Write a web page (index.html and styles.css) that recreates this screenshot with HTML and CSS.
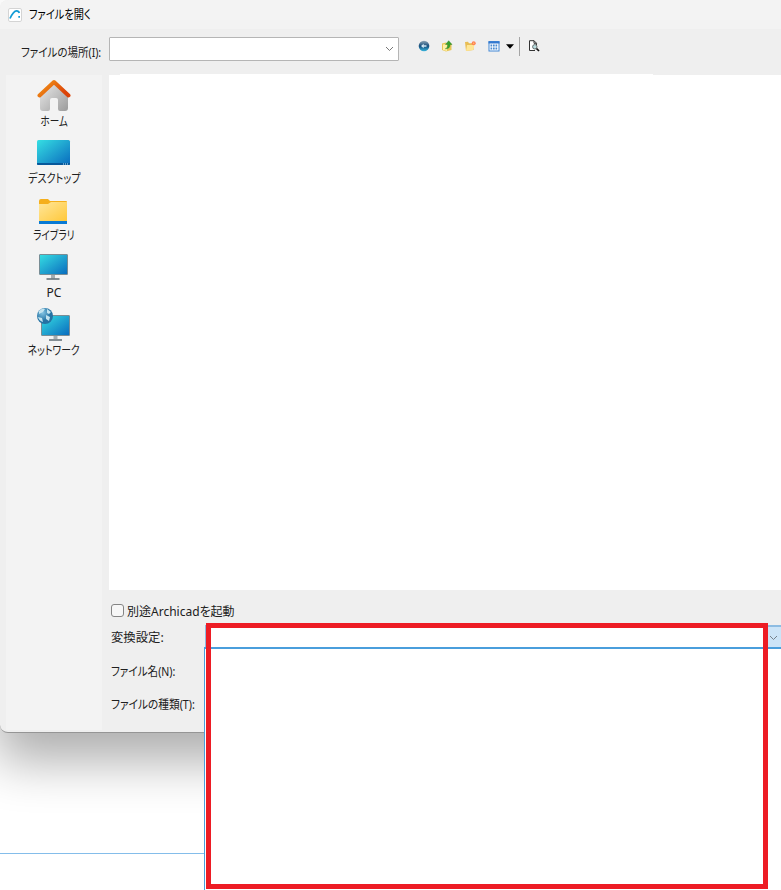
FILE: index.html
```html
<!DOCTYPE html>
<html lang="ja">
<head>
<meta charset="utf-8">
<title>ファイルを開く</title>
<link rel="stylesheet" href="styles.css">
</head>
<body>
<main class="screen">
  <section class="dialog">
    <header class="titlebar">
      <svg class="app-icon" width="14" height="14" viewBox="0 0 14 14"><rect x=".5" y=".5" width="13" height="13" rx="1.500" fill="#fff" stroke="#d4d4d4"/><path d="M2 10.500C4 6 6 3 8.500 2.800Q10.700 2.700 11.300 5" fill="none" stroke="#139bd5" stroke-width="1.700"/><path d="M10.300 8h1.700v1.700h-1.700z" fill="#139bd5"/></svg>
      <span class="t title">ファイルを開く</span>
    </header>
    <div class="toolbar">
      <label class="location"><span class="t location-text">ファイルの場所(I):</span></label>
      <div class="location-box"><svg width="9" height="6" viewBox="0 0 9 6"><path d="M1 1l3.500 3.500L8 1" fill="none" stroke="#777"/></svg></div>
      <div class="tools">
        <svg width="12" height="12" viewBox="0 0 12 12"><defs><linearGradient id="back" x2="0" y2="1"><stop stop-color="#91a6b5"/><stop offset=".5" stop-color="#174e7d"/><stop offset="1" stop-color="#38b6de"/></linearGradient></defs><circle cx="6" cy="6" r="5.300" fill="url(#back)"/><path d="M3 6l2.700-2.300v1.500h2.800v1.600H5.700v1.500z" fill="#d5eaf5"/></svg>
        <svg width="12" height="12" viewBox="0 0 12 12"><path d="M1 3.500l4-1 1 1h4.500v6.500L5 11.500 1 10z" fill="#e7c557"/><path d="M2 4.500l4-.5v7L2 10z" fill="#fff0a5"/><path d="M4.300 8.800Q7 8 6.800 4.500H4.500L7.700.7l3.300 3.800H9Q9.200 9 4.300 8.800z" fill="#35a22e" stroke="#257c24" stroke-width=".4"/></svg>
        <svg width="12" height="12" viewBox="0 0 12 12"><path d="M1 2l3-.3 1 1.500h4.500V10L2 11z" fill="#e8bd54"/><path d="M2 11l1-6h7.500L9 10z" fill="#ffe696"/><circle cx="9.700" cy="3.300" r="2" fill="#ff8058"/><circle cx="9.700" cy="3.300" r=".7" fill="#ffd060"/></svg>
        <svg width="12" height="12" viewBox="0 0 12 12"><rect x="1" y="1.500" width="10" height="9.500" fill="#fff" stroke="#4388d5"/><path d="M.5 2.500h11" stroke="#3278cf" stroke-width="2"/><path d="M2.500 5.500h7M2.500 8.500h7" stroke="#488ad0" stroke-width="1.800" stroke-dasharray="1.700 .8"/></svg>
        <svg class="caret" width="8" height="5" viewBox="0 0 8 5"><path d="M0 .2h8L4 4.700z" fill="#000"/></svg>
        <i class="separator"></i>
        <svg class="preview" width="12" height="12" viewBox="0 0 12 12"><path d="M7 10.500H1.500V.7H6l2.500 2.500M6 .7v2.600h2.500v2" fill="#fff" stroke="#333"/><circle cx="6.800" cy="6.800" r="2.200" fill="#b9dfe1" stroke="#656b6b"/><path d="M8.500 8.500L11 11" stroke="#111" stroke-width="1.700"/></svg>
      </div>
    </div>
    <div class="content">
      <nav class="places">
        <div class="place">
          <svg width="34" height="38" viewBox="0 0 34 38"><defs><linearGradient id="wall" x2="1" y2="1"><stop stop-color="#eee"/><stop offset="1" stop-color="#9b9b9b"/></linearGradient><linearGradient id="roof" x2="1" y2=".5"><stop stop-color="#f39a18"/><stop offset="1" stop-color="#dc4308"/></linearGradient></defs><path d="M3 18L17 6l14 12v15q0 3-3 3h-5q-2 0-2-2V25q0-2-2-2h-4q-2 0-2 2v9q0 2-2 2H6q-3 0-3-3z" fill="url(#wall)"/><path d="M2.500 20.500L17 7l14.500 13.500" fill="none" stroke="url(#roof)" stroke-width="4" stroke-linecap="round" stroke-linejoin="round"/></svg>
          <span class="t home">ホーム</span>
        </div>
        <div class="place">
          <svg width="34" height="38" viewBox="1 0 34 38"><defs><linearGradient id="screen" x2="1" y2="1"><stop stop-color="#35dfe3"/><stop offset=".5" stop-color="#20a4d0"/><stop offset="1" stop-color="#086abe"/></linearGradient></defs><rect x="1" y="8" width="33" height="25" rx="1.500" fill="url(#screen)"/><path d="M1 31h33v1q0 1-1 1H2q-1 0-1-1z" fill="#07589a"/><path d="M27 32h5" stroke="#bcecff" stroke-dasharray="1 1"/></svg>
          <span class="t desktop">デスクトップ</span>
        </div>
        <div class="place">
          <svg width="34" height="38" viewBox="1 0 34 38"><defs><linearGradient id="folder" x2="1" y2="1"><stop stop-color="#ffe69a"/><stop offset="1" stop-color="#ffc83a"/></linearGradient></defs><path d="M3 11q0-2 2-2h7l2 2h16q1 0 1 1v8H3z" fill="#f5af1c"/><path d="M3 14h9l3-2h16v19H3z" fill="url(#folder)"/><path d="M3 31h28v3H3z" fill="#087ad5"/></svg>
          <span class="t library">ライブラリ</span>
        </div>
        <div class="place">
          <svg width="34" height="38" viewBox="1 0 34 38"><path d="M15 27h4v5h-4z" fill="#a5adb2"/><rect x="3.500" y="7.500" width="28" height="20" rx=".5" fill="url(#screen)" stroke="#798d95"/><path d="M10.500 32h13" stroke="#707b82" stroke-width="1.700"/></svg>
          <span class="t pc">PC</span>
        </div>
        <div class="place">
          <svg width="34" height="38" viewBox="1 0 34 38"><defs><radialGradient id="globe" cx=".35" cy=".3"><stop stop-color="#85c5e3"/><stop offset="1" stop-color="#2472a3"/></radialGradient></defs><path d="M17.500 30h4v5h-4z" fill="#a5adb2"/><rect x="5.500" y="11.500" width="28" height="20" rx=".5" fill="url(#screen)" stroke="#798d95"/><path d="M13 36h13" stroke="#707b82" stroke-width="1.700"/><circle cx="9" cy="12" r="8" fill="url(#globe)"/><path d="M3 7q3-3 6-2l-2 3-4 2zM2 13l4 1 1 4q-4-1-5-5M11 5l4 3-2 2-2-1zM10 11l4 2-1 4-3-2z" fill="#c4e4ef"/></svg>
          <span class="t network">ネットワーク</span>
        </div>
      </nav>
      <div class="panel">
        <div class="files"></div>
        <div class="form">
          <label class="check"><span class="box"></span><span class="t launch">別途Archicadを起動</span></label>
          <div class="row"><span class="t translator">変換設定:</span></div>
          <div class="row name-row"><span class="t name">ファイル名(N):</span></div>
          <div class="row type-row"><span class="t type">ファイルの種類(T):</span></div>
        </div>
      </div>
    </div>
  </section>
  <div class="page-line"></div>
  <div class="combo"><svg width="9" height="6" viewBox="0 0 9 6"><path d="M1 1l3.500 3.500L8 1" fill="none" stroke="#76818a"/></svg></div>
  <div class="dropdown"></div>
  <div class="highlight"></div>
</main>
</body>
</html>
```
FILE: styles.css
```css
* { box-sizing: border-box; }
body { margin: 0; background: #fff; }
svg { display: block; flex: none; }
.screen {
  position: relative;
  width: 781px;
  height: 890px;
  overflow: hidden;
  font: 12px/18px "Noto Sans", "Noto Sans CJK JP", sans-serif;
  color: #202020;
}
.dialog {
  width: 1100px;
  height: 733px;
  background: #efefef;
  border-bottom: 1px solid #959595;
  border-radius: 8px;
  box-shadow: -3px 28px 50px rgba(0, 0, 0, .32);
}
.t {
  display: inline-block;
  white-space: nowrap;
  font-feature-settings: "palt";
  transform-origin: left center;
}
.titlebar {
  display: flex;
  align-items: center;
  height: 29px;
  padding-left: 8px;
  gap: 7px;
  background: #f3f3f3;
  border-radius: 8px 0 0;
}
.title { color: #000; transform: scaleX(.85); }
.toolbar {
  display: flex;
  height: 45px;
  padding-top: 8px;
}
.location { width: 109px; padding: 7px 0 0 21px; }
.location-text { transform: scaleX(.875); }
.location-box {
  display: flex;
  justify-content: flex-end;
  align-items: center;
  width: 290px;
  height: 24px;
  padding-right: 4px;
  border: 1px solid #b5b5b5;
  border-radius: 1px;
  background: #fff;
}
.tools {
  display: flex;
  align-items: center;
  height: 18px;
  padding-left: 18.5px;
  gap: 11.4px;
}
.caret { margin-left: -5px; }
.separator {
  width: 1px;
  height: 19px;
  margin-left: -6px;
  background: #a5a5a5;
}
.preview { margin-left: -3.5px; }
.content { display: flex; height: 658px; }
.places {
  width: 96px;
  height: 655px;
  margin: 1px 7px 0 6px;
  background: #f3f3f3;
}
.place {
  display: flex;
  flex-direction: column;
  align-items: center;
  height: 57.25px;
}
.place .t { transform-origin: center; }
.place .home { transform: scaleX(.8); }
.place .desktop { transform: scaleX(.84); }
.place .library { transform: translateY(-1px) scaleX(.8); }
.place .pc { transform: translateY(-1px); }
.place .network { transform: scaleX(.82); }
.panel { flex: 1; }
.files {
  height: 516px;
  background: linear-gradient(#fff, #fff) 11px 0 / 533px 1px no-repeat,
    linear-gradient(#fff, #fff) 0 1px / 100% 516px no-repeat;
}
.form { padding: 12px 0 0 2px; }
.check { display: flex; align-items: flex-start; height: 18px; gap: 3px; padding-top: 1px; }
.box {
  width: 13px;
  height: 13px;
  margin-top: 1px;
  border: 1px solid #858585;
  border-radius: 3px;
  background: #f7f7f7;
}
.row { height: 18px; margin-top: 9px; }
.name-row { margin-top: 16px; }
.type-row { margin-top: 15px; }
.translator { transform: scaleX(1.03); }
.name { transform: scaleX(.88); }
.type { transform: scaleX(.89); }
.page-line {
  position: absolute;
  left: 0;
  top: 853px;
  width: 205px;
  height: 1px;
  background: #84bdea;
}
.combo {
  position: absolute;
  left: 205px;
  top: 625px;
  display: flex;
  justify-content: flex-end;
  align-items: center;
  width: 576px;
  height: 23px;
  padding-right: 3px;
  border-top: 2px solid #8dbce2;
  border-left: 1px solid #8dbce2;
  background: linear-gradient(90deg, #fff 562px, #cce4f7 562px);
}
.dropdown {
  position: absolute;
  left: 204px;
  top: 647px;
  width: 578px;
  height: 244px;
  border: 1px solid #4a9edc;
  border-top-width: 2px;
  background: #fff;
}
.highlight {
  position: absolute;
  left: 206px;
  top: 623px;
  width: 562px;
  height: 266px;
  border: 5px solid #ed1c24;
}
```
